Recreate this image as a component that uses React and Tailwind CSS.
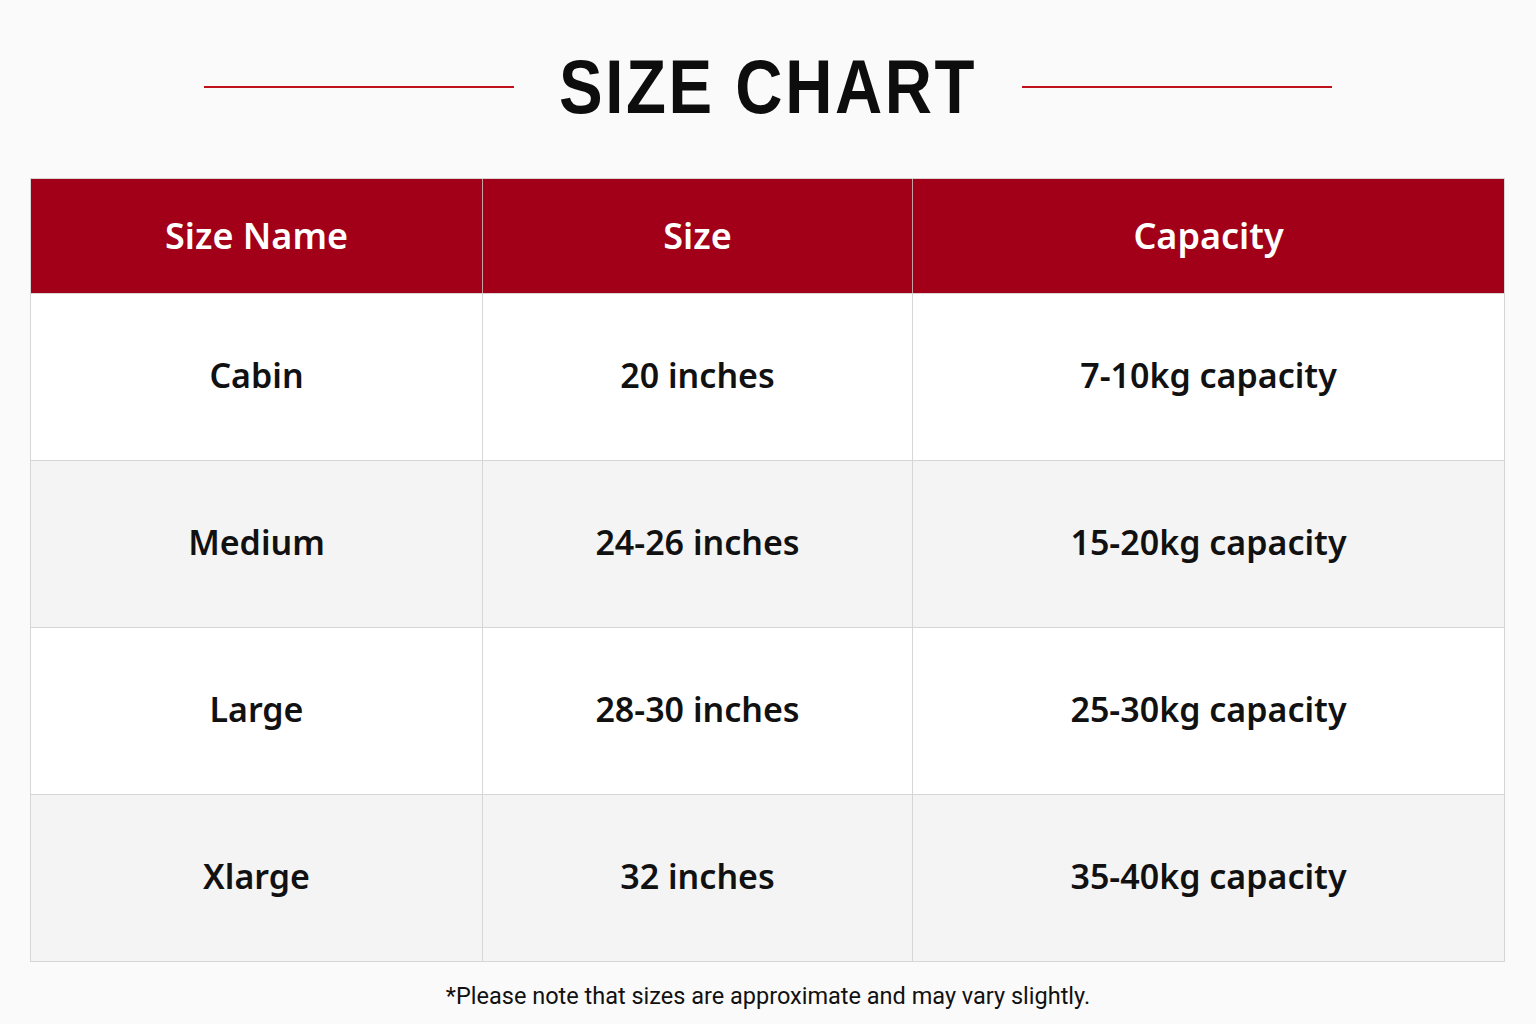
const rows = [
  { name: 'Cabin', size: '20 inches', cap: '7-10kg capacity' },
  { name: 'Medium', size: '24-26 inches', cap: '15-20kg capacity' },
  { name: 'Large', size: '28-30 inches', cap: '25-30kg capacity' },
  { name: 'Xlarge', size: '32 inches', cap: '35-40kg capacity' },
]

export default function App() {
  return (
    <div className="w-[1536px] h-[1024px] bg-[#fafafa] font-['Noto_Sans',sans-serif] text-[#111]">
      <div className="flex items-center justify-center h-[178px] pb-[4px]">
        <div className="w-[310px] h-[2px] bg-[#c0101c]" />
        <div className="w-[508px] flex justify-center">
          <h1 className="whitespace-nowrap scale-x-[0.86] text-[76px] leading-none font-bold tracking-[3px] text-[#0d0d0d] font-['Liberation_Sans',sans-serif]">
            SIZE CHART
          </h1>
        </div>
        <div className="w-[310px] h-[2px] bg-[#c0101c]" />
      </div>

      <div className="mx-[30px] w-[1475px] border border-[#d6d6d6]">
        <div className="grid grid-cols-[452px_430px_1fr] h-[114px] bg-[#a10018] text-white text-[36px] font-semibold">
          <div className="flex items-center justify-center border-r border-[#c9a0a4]">Size Name</div>
          <div className="flex items-center justify-center border-r border-[#c9a0a4]">Size</div>
          <div className="flex items-center justify-center">Capacity</div>
        </div>
        {rows.map((r, i) => (
          <div
            key={r.name}
            className={`grid grid-cols-[452px_430px_1fr] h-[167px] text-[34px] font-semibold border-t border-[#d6d6d6] ${i % 2 ? 'bg-[#f4f4f4]' : 'bg-white'}`}
          >
            <div className="flex items-center justify-center pb-[4px] border-r border-[#d6d6d6]">{r.name}</div>
            <div className="flex items-center justify-center pb-[4px] border-r border-[#d6d6d6]">{r.size}</div>
            <div className="flex items-center justify-center pb-[4px]">{r.cap}</div>
          </div>
        ))}
      </div>

      <p className="mt-[17px] text-center text-[23.5px] text-[#111] font-['Roboto',sans-serif]">
        *Please note that sizes are approximate and may vary slightly.
      </p>
    </div>
  )
}
